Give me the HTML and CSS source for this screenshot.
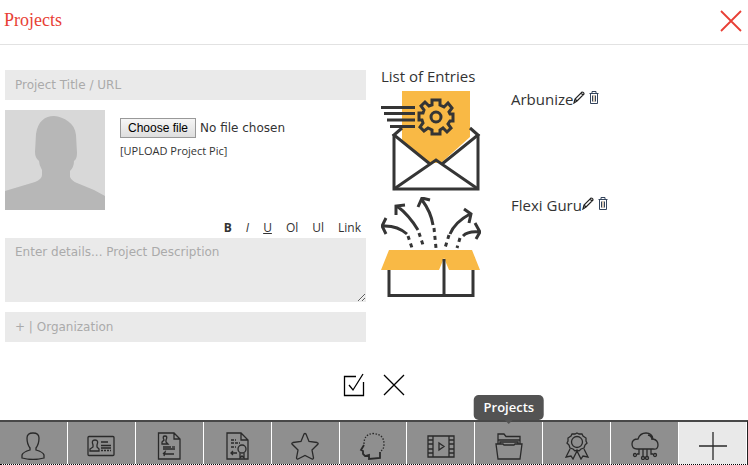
FILE: index.html
```html
<!DOCTYPE html>
<html lang="en">
<head>
<meta charset="utf-8">
<meta name="viewport" content="width=device-width, initial-scale=1">
<title>Projects</title>
<link rel="stylesheet" href="styles.css">
</head>
<body>
<header class="header">
  <h1>Projects</h1>
  <button class="icon-button" type="button" aria-label="Close">
    <svg class="close-icon" viewBox="0 0 22 22"><path d="M1 1 21 21M21 1 1 21"/></svg>
  </button>
</header>

<main class="content">
  <form class="form" id="project-form">
    <input class="field" type="text" placeholder="Project Title / URL" aria-label="Project Title / URL">
    <div class="upload">
      <svg class="avatar" viewBox="0 0 100 100" aria-hidden="true">
        <path fill="#d8d8d8" d="M0 0H100V100H0Z"/>
        <path fill="#b7b7b7" d="M0 81 30 72Q37 69 37 65V60Q34 55 34 51Q30 48 30 42L31 24C33 11 40 6 49 6C59 7 70 13 71 25L72 43Q72 49 69 51Q69 57 65 61V67Q67 71 72 73L89 80 100 86V100H0Z"/>
      </svg>
      <div class="upload-info">
        <div class="file-row">
          <input class="file-input" type="file" id="project-pic">
          <label class="file-button" for="project-pic">Choose file</label>
          <span class="file-name">No file chosen</span>
        </div>
        <span class="upload-hint">[UPLOAD Project Pic]</span>
      </div>
    </div>
    <div class="toolbar">
      <button type="button"><b>B</b></button>
      <button type="button"><i>I</i></button>
      <button type="button"><u>U</u></button>
      <button type="button">Ol</button>
      <button type="button">Ul</button>
      <button type="button">Link</button>
    </div>
    <textarea class="field details" placeholder="Enter details... Project Description" aria-label="Project Description"></textarea>
    <input class="field" type="text" placeholder="+ | Organization" aria-label="Organization">
  </form>

  <section class="entries">
    <h2>List of Entries</h2>
    <ul>
      <li>
        <svg class="entry-art" viewBox="0 0 100 100" aria-hidden="true">
          <path fill="#f9b945" d="M21 0H89V46L60 72H49L21 50Z"/>
          <g fill="none" stroke="#353535" stroke-width="3">
            <path d="M21 37 13 44 49 73M89 37 97 44 61 73M13 98 55 69 97 98"/>
            <path d="M13 43V98H97V43"/>
            <path d="M0 16.500H34M3 22.500H34M6 29H34M9 35.500H34"/>
            <circle cx="55" cy="26" r="5"/>
            <path d="M51 9H59V14L63 16 67 12 71 17 68 21 69 23H72V30H69L67 33 70 37 66 41 62 37 59 39V43H51V39L47 37 43 40 39 36 42 32 41 29H38V22H42L43 19 40 15 44 11 48 15 51 14Z"/>
          </g>
        </svg>
        <div class="entry-label"><span>Arbunize</span><button type="button" aria-label="Edit Arbunize"><svg class="pencil" viewBox="0 0 12 13"><path d="M1 12 2 8 9 1Q11 1 11 3L4 10ZM8 2 10 4M2 8 4 10"/></svg></button><button type="button" aria-label="Delete Arbunize"><svg class="trash" viewBox="0 0 10 13"><path d="M.5 2.500H9.500M3 2V.5H7V2M1.500 3V12.500H8.500V3M3.500 4.500V10.500M6.500 4.500V10.500"/><path class="fill" d="M5 4V11"/></svg></button></div>
      </li>
      <li>
        <svg class="entry-art" viewBox="0 0 100 100" aria-hidden="true">
          <path fill="none" stroke="#353535" stroke-width="3" d="M8 60V98.500H92V60"/>
          <path fill="#f9b945" d="M8 53H91L99 73H68L63 61 58 73H0Z"/>
          <g fill="none" stroke="#353535" stroke-width="3">
            <path d="M63 62V98"/>
            <path d="M1 29Q16 28 26 37M5 21 1 29 5 37M16 9Q28 18 37 33M24 8 15 9 15 18M41 3Q50 15 52 28M37 10 41 1 49 3M69 37Q74 25 89 17M83 12 90 17 88 26M82 39Q87 34 98 35M94 26 99 35 95 42"/>
            <path stroke-dasharray="4 4" d="M27 39 31 51M38 36 43 51M53 31 55 51M68 38 64 51M79 41 76 51"/>
          </g>
        </svg>
        <div class="entry-label"><span>Flexi Guru</span><button type="button" aria-label="Edit Flexi Guru"><svg class="pencil" viewBox="0 0 12 13"><path d="M1 12 2 8 9 1Q11 1 11 3L4 10ZM8 2 10 4M2 8 4 10"/></svg></button><button type="button" aria-label="Delete Flexi Guru"><svg class="trash" viewBox="0 0 10 13"><path d="M.5 2.500H9.500M3 2V.5H7V2M1.500 3V12.500H8.500V3M3.500 4.500V10.500M6.500 4.500V10.500"/><path class="fill" d="M5 4V11"/></svg></button></div>
      </li>
    </ul>
  </section>
</main>

<div class="actions">
  <button class="icon-button" type="submit" form="project-form" aria-label="Save">
    <svg class="action-icon" viewBox="0 0 22 24"><path d="M13 3.500H1.500V22.500H20.500V9"/><path d="M6 12 10 17 20 1"/></svg>
  </button>
  <button class="icon-button" type="button" aria-label="Cancel">
    <svg class="action-icon" viewBox="0 0 22 24"><path d="M1 2 21 22M21 2 1 22"/></svg>
  </button>
</div>

<nav class="tabs" aria-label="Sections">
  <a href="#profile" aria-label="Profile"><svg viewBox="0 0 28 28"><path d="M11 16Q8 12 8 6Q8 1 14 1T20 6Q20 12 17 16V18Q24 20 25 23V26Q20 27.500 14 27.500T3 26V23Q4 20 11 18Z"/></svg></a>
  <a href="#contact" aria-label="Contact"><svg viewBox="0 0 28 28"><rect x="1" y="4.500" width="26" height="19" rx="1"/><path d="M6 13Q4 8 8 8T10 13V15L12 17V19H3V17L6 15ZM14 10H21M14 13.500H24M14 16H24"/><path stroke-dasharray="2 1" d="M14 18.500H24"/></svg></a>
  <a href="#resume" aria-label="Resume"><svg viewBox="0 0 28 28"><path d="M3.500 1H19L25 7V27H3.500ZM19 1V7H25M9 8Q7 4 10 4T11 8V10L13 12H7V10ZM8 15H16M8 17H20M10 22H19M8 22 10 20 9 24"/><path stroke-dasharray="3 1" d="M17 15H21"/></svg></a>
  <a href="#certificates" aria-label="Certificates"><svg viewBox="0 0 28 28"><path d="M4 27V1H18L25 8V27ZM18 1V8H25"/><circle cx="19" cy="17" r="4"/><path d="M17 21V26L19 24 21 26V21M8 21H14M10 19 8 21 10 23"/><path stroke-dasharray="3 1" d="M8 8H13M8 11H17M8 15H13"/></svg></a>
  <a href="#highlights" aria-label="Highlights"><svg viewBox="0 0 28 28"><path d="M13 2Q14 1 15 2L18 9.500 26 10.500Q27.500 11 27 12L21 18 22.500 26Q22 27.500 21 27L14 23.500 7 27Q6 27.500 5.500 26L7 18 1 12Q.5 11 2 10.500L10 9.500Z"/></svg></a>
  <a href="#skills" aria-label="Skills"><svg viewBox="0 0 28 28"><path stroke-dasharray="1.500 1.500" d="M5 12Q5 2 14 1.500Q25 2 25 12Q25 17 22 19"/><path stroke-width="1.800" d="M5 13 2 18 4 19V22L6 24 10 23V27L21 26V20"/></svg></a>
  <a href="#media" aria-label="Media"><svg viewBox="0 0 28 28"><path d="M1 4H27V25H1ZM6 4V25M22 4V25M1 8H6M1 12H6M1 17H6M1 21H6M22 8H27M22 12H27M22 17H27M22 21H27M12 11V18L17 14.500Z"/></svg></a>
  <a href="#projects" aria-label="Projects" aria-current="page"><span class="tooltip">Projects</span><svg viewBox="0 0 28 28"><path d="M3 12V2H9L11 4.500H25V12M3 8H25M5 12V10H23V12M1 12H8L9 13H19L20 12H27L25 27H3Z"/></svg></a>
  <a href="#awards" aria-label="Awards"><svg viewBox="0 0 28 28"><circle cx="14" cy="10" r="5.500"/><path d="M14 1 16 2 19 2 20 4 23 6V9L24 11 22 13 21 16 18 17 16 19 14 18 12 19 10 17 7 16 6 13 4 11 5 9V6L8 4 9 2H12ZM7 17 3 25 8 24 10 27 14 19 18 27 20 24 25 25 21 17"/></svg></a>
  <a href="#cloud" aria-label="Cloud"><svg viewBox="0 0 28 28"><path d="M6 17Q1 17 1 12T7 7Q9 1 15 1T22 7Q27 8 27 13T22 17H6M17 3Q21 4 21 8M8 17V22H6M12 17V24M16 17V24M20 17V22H22"/><circle cx="4" cy="23" r="1.500"/><circle cx="12" cy="26" r="1.500"/><circle cx="16" cy="26" r="1.500"/><circle cx="24" cy="23" r="1.500"/></svg></a>
  <a class="add" href="#add" aria-label="Add"><svg viewBox="0 0 28 28"><path d="M14 0V28M0 14H28"/></svg></a>
</nav>
</body>
</html>
```
FILE: styles.css
```css
* { box-sizing: border-box; }

body {
  margin: 0;
  min-height: 100vh;
  display: flex;
  flex-direction: column;
  background: #fff;
  color: #333;
  font-family: "Open Sans", sans-serif;
  font-size: 15px;
}

button {
  padding: 0;
  border: 0;
  background: none;
  color: inherit;
  font: inherit;
  cursor: pointer;
}

svg {
  display: block;
  fill: none;
}

.header {
  display: flex;
  align-items: center;
  justify-content: space-between;
  height: 45px;
  padding: 0 6px 3px 4px;
  border-bottom: 1px solid #e2e2e2;
}

.header h1 {
  margin: 0;
  color: #e83f35;
  font: 18px "Liberation Serif", serif;
}

.close-icon {
  width: 22px;
  height: 22px;
  stroke: #e83f35;
  stroke-width: 1.8;
}

.content {
  display: grid;
  grid-template-columns: 1fr 1fr;
  gap: 15px;
  padding: 25px 6px 0 5px;
}

.form {
  display: flex;
  flex-direction: column;
  gap: 10px;
}

.field {
  display: block;
  width: 100%;
  height: 30px;
  padding: 0 10px;
  border: 0;
  border-radius: 0;
  background: #eaeaea;
  color: #333;
  font: 12px "DejaVu Sans", sans-serif;
}

.field::placeholder {
  color: #aaa;
  opacity: 1;
}

.details {
  height: 64px;
  padding-top: 7px;
  resize: vertical;
}

.upload {
  display: flex;
  gap: 15px;
}

.avatar {
  width: 100px;
  height: 100px;
}

.upload-info {
  padding-top: 8px;
}

.file-row {
  display: flex;
  align-items: center;
  gap: 4px;
  position: relative;
}

.file-input {
  position: absolute;
  width: 76px;
  height: 20px;
  opacity: 0;
}

.file-button {
  width: 76px;
  height: 20px;
  border: 1px solid #999;
  background: linear-gradient(#f6f6f6, #dedede);
  color: #000;
  font: 12px/18px "Liberation Sans", sans-serif;
  text-align: center;
}

.file-name {
  font: 12px/20px "DejaVu Sans", sans-serif;
}

.upload-hint {
  display: block;
  padding-top: 5px;
  font-size: 11px;
  line-height: 15px;
}

.toolbar {
  display: flex;
  justify-content: flex-end;
  align-items: flex-start;
  gap: 14px;
  height: 18px;
  padding-right: 5px;
  margin-bottom: -10px;
  font-size: 12px;
  line-height: 16px;
}

.entries h2 {
  margin: -3px 0 0;
  padding-bottom: 3px;
  font-size: 15px;
  font-weight: 400;
  line-height: 18px;
}

.entries ul {
  display: grid;
  gap: 6px;
  margin: 0;
  padding: 3px 0 0;
  list-style: none;
}

.entries li {
  display: flex;
  gap: 30px;
}

.entry-art {
  width: 100px;
  height: 100px;
}

.entry-label {
  display: flex;
  align-items: flex-start;
  line-height: 16px;
}

.pencil {
  width: 12px;
  height: 13px;
  stroke: #222;
  stroke-width: 1.2;
}

.trash {
  width: 10px;
  height: 13px;
  margin-left: 4px;
  stroke: #34445c;
}

.trash .fill { stroke: #b39a78; }

.actions {
  display: flex;
  justify-content: center;
  gap: 18px;
  margin: auto 0 23px;
}

.action-icon {
  width: 22px;
  height: 24px;
  stroke: #000;
  stroke-width: 1.3;
}

.tabs {
  display: grid;
  grid-template-columns: repeat(11, 1fr);
  height: 45px;
  border-top: 2px solid #484848;
  border-right: 1px solid #222;
  border-bottom: 1px dotted #000;
}

.tabs a {
  display: flex;
  justify-content: center;
  align-items: center;
  padding-top: 6px;
  position: relative;
  border-right: 1px solid #fff;
  background: #8f8f8f;
}

.tabs a.add { background: #e9e9e9; }

.tabs svg {
  width: 28px;
  height: 28px;
  stroke: #2a2a2a;
  stroke-width: 1.3;
}

.tooltip {
  position: absolute;
  bottom: calc(100% + 2px);
  left: 50%;
  transform: translateX(-50%);
  padding: 0 10px;
  border-radius: 5px;
  background: #535353;
  color: #fff;
  font-size: 13px;
  font-weight: 600;
  line-height: 25px;
}

.tooltip::after {
  content: "";
  position: absolute;
  top: 100%;
  left: 50%;
  margin-left: -4px;
  border: 4px solid transparent;
  border-top-color: #535353;
}
```
